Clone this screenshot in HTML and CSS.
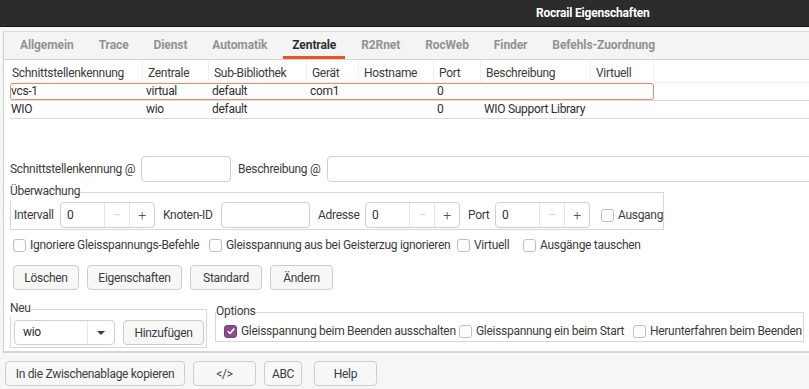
FILE: index.html
```html
<!DOCTYPE html>
<html lang="de">
<head>
    <meta charset="UTF-8">
    <title>Rocrail Eigenschaften</title>
    <link rel="stylesheet" href="styles.css">
</head>
<body>
    <div class="titlebar"><span class="title">Rocrail Eigenschaften</span></div>

    <div class="dialog">
        <div class="notebook">
            <div class="tabs">
                <span class="tab">Allgemein</span>
                <span class="tab">Trace</span>
                <span class="tab">Dienst</span>
                <span class="tab">Automatik</span>
                <span class="tab active">Zentrale</span>
                <span class="tab">R2Rnet</span>
                <span class="tab">RocWeb</span>
                <span class="tab">Finder</span>
                <span class="tab">Befehls-Zuordnung</span>
            </div>

            <div class="page">
                <div class="list">
                    <div class="list-head">
                        <span>Schnittstellenkennung</span>
                        <span>Zentrale</span>
                        <span>Sub-Bibliothek</span>
                        <span>Gerät</span>
                        <span>Hostname</span>
                        <span>Port</span>
                        <span>Beschreibung</span>
                        <span>Virtuell</span>
                    </div>
                    <div class="list-row">
                        <div class="cells selected">
                            <span>vcs-1</span>
                            <span>virtual</span>
                            <span>default</span>
                            <span>com1</span>
                            <span></span>
                            <span>0</span>
                            <span></span>
                            <span></span>
                        </div>
                    </div>
                    <div class="list-row">
                        <div class="cells">
                            <span>WIO</span>
                            <span>wio</span>
                            <span>default</span>
                            <span></span>
                            <span></span>
                            <span>0</span>
                            <span>WIO Support Library</span>
                            <span></span>
                        </div>
                    </div>
                </div>

                <div class="ident-row">
                    <label class="lbl lbl-ident">Schnittstellenkennung @</label>
                    <input class="entry entry-ident" type="text">
                    <label class="lbl lbl-desc">Beschreibung @</label>
                    <input class="entry entry-desc" type="text">
                </div>

                <fieldset class="group watch">
                    <legend>Überwachung</legend>
                    <div class="watch-row">
                        <span class="lbl lbl-interval">Intervall</span>
                        <div class="spin">
                            <span class="spin-value">0</span>
                            <span class="spin-btn dim">−</span>
                            <span class="spin-btn">+</span>
                        </div>
                        <span class="lbl lbl-node">Knoten-ID</span>
                        <input class="entry entry-node" type="text">
                        <span class="lbl lbl-addr">Adresse</span>
                        <div class="spin">
                            <span class="spin-value">0</span>
                            <span class="spin-btn dim">−</span>
                            <span class="spin-btn">+</span>
                        </div>
                        <span class="lbl lbl-port">Port</span>
                        <div class="spin">
                            <span class="spin-value">0</span>
                            <span class="spin-btn dim">−</span>
                            <span class="spin-btn">+</span>
                        </div>
                        <label class="check check-out"><span class="box"></span>Ausgang</label>
                    </div>
                </fieldset>

                <div class="check-row">
                    <label class="check c-ignore"><span class="box"></span>Ignoriere Gleisspannungs-Befehle</label>
                    <label class="check c-ghost"><span class="box"></span>Gleisspannung aus bei Geisterzug ignorieren</label>
                    <label class="check c-virtual"><span class="box"></span>Virtuell</label>
                    <label class="check"><span class="box"></span>Ausgänge tauschen</label>
                </div>

                <div class="button-row">
                    <button class="btn b-delete">Löschen</button>
                    <button class="btn b-props">Eigenschaften</button>
                    <button class="btn b-default">Standard</button>
                    <button class="btn b-change">Ändern</button>
                </div>

                <div class="bottom-groups">
                    <fieldset class="group neu">
                        <legend>Neu</legend>
                        <div class="neu-row">
                            <div class="combo">
                                <span class="combo-value">wio</span>
                                <span class="combo-arrow"></span>
                            </div>
                            <button class="btn b-add">Hinzufügen</button>
                        </div>
                    </fieldset>

                    <fieldset class="group options">
                        <legend>Options</legend>
                        <div class="options-row">
                            <label class="check o-off"><span class="box checked">
                                <svg width="10" height="10" viewBox="0 0 10 10"><path d="M1.8 5.2 L4 7.4 L8.3 2.6" fill="none" stroke="#fff" stroke-width="1.6"/></svg>
                            </span>Gleisspannung beim Beenden ausschalten</label>
                            <label class="check o-on"><span class="box"></span>Gleisspannung ein beim Start</label>
                            <label class="check"><span class="box"></span>Herunterfahren beim Beenden</label>
                        </div>
                    </fieldset>
                </div>
            </div>
        </div>

        <div class="actions">
            <button class="btn a-copy">In die Zwischenablage kopieren</button>
            <button class="btn a-xml">&lt;/&gt;</button>
            <button class="btn a-abc">ABC</button>
            <button class="btn a-help">Help</button>
        </div>
    </div>
</body>
</html>
```

FILE: styles.css
```css
* {
    box-sizing: border-box;
    margin: 0;
    padding: 0;
}

body {
    width: 809px;
    height: 389px;
    overflow: hidden;
    background: #f6f6f5;
    font-family: Roboto, "Liberation Sans", sans-serif;
    font-size: 12px;
    letter-spacing: -0.3px;
    color: #3c3c3c;
}

input, button {
    font: inherit;
    letter-spacing: inherit;
    color: inherit;
}

/* window title */
.titlebar {
    height: 27px;
    padding-left: 536px;
    background: #2c2c2c;
    border-bottom: 1px solid #151515;
    color: #ffffff;
    font-weight: bold;
    letter-spacing: -0.2px;
    line-height: 26px;
}

.dialog {
    padding: 4px 0 0 3px;
}

.notebook {
    border-top: 1px solid #dadada;
    border-left: 1px solid #cfcfcf;
}

/* tabs */
.tabs {
    display: flex;
    gap: 7px;
    height: 28px;
    padding-left: 7px;
    background: #f4f4f4;
    border-bottom: 1px solid #d4d4d4;
}

.tab {
    height: 27px;
    padding: 0 9px;
    line-height: 27px;
    font-weight: bold;
    letter-spacing: -0.1px;
    color: #929292;
    white-space: nowrap;
}

.tab.active {
    color: #2f2f2f;
    border-bottom: 3px solid #e95420;
    line-height: 26px;
}

.page {
    height: 293px;
    background: #ffffff;
    border-bottom: 2px solid #d6d6d6;
    overflow: hidden;
}

/* interface list */
.list {
    margin-left: 6px;
}

.list-head,
.cells {
    display: grid;
    grid-template-columns: 133px 66px 98px 52px 75px 47px 110px 63px;
}

.list-head {
    height: 23px;
    border-bottom: 1px solid #f2f2f2;
    color: #3a3a3a;
}

.list-head span {
    padding: 6px 0 0 5px;
    line-height: 15px;
    border-right: 1px solid #f0f0f0;
    white-space: nowrap;
}

.list-head span:first-child {
    padding-left: 2px;
}

.list-row {
    border-bottom: 1px solid #dcdcdc;
}

.cells {
    width: 644px;
    height: 17px;
    border: 1px solid transparent;
    border-radius: 3px;
    line-height: 15px;
    color: #2e2e2e;
}

.cells span {
    padding-left: 2px;
    white-space: nowrap;
}

.cells span:first-child {
    padding-left: 0;
}

.list-row .cells.selected {
    border-color: #eb8a6e;
}

/* labels and entries */
.lbl {
    flex: none;
    white-space: nowrap;
}

.entry {
    height: 26px;
    border: 1px solid #d3cfcb;
    border-radius: 4px;
    background: #ffffff;
    padding: 0 7px;
    outline: none;
}

.ident-row {
    display: flex;
    align-items: center;
    margin-top: 37px;
    padding-left: 6px;
    height: 26px;
}

.lbl-ident { width: 131px; }
.entry-ident { width: 90px; }
.lbl-desc { width: 89px; margin-left: 7px; }
.entry-desc { width: 520px; flex: none; }

/* framed groups */
.group {
    border: 1px solid #d8d8d8;
}

.group legend {
    padding: 0 0 2px;
    line-height: 14px;
    color: #3c3c3c;
}

.watch {
    width: 654px;
    margin: 2px 0 0 6px;
    padding: 2px 0 1px 3px;
}

.watch legend,
.neu legend {
    margin-left: -4px;
}

.watch-row {
    display: flex;
    align-items: center;
    height: 26px;
}

.lbl-interval { width: 46px; }
.lbl-node { width: 58px; margin-left: 8px; }
.entry-node { width: 89px; }
.lbl-addr { width: 47px; margin-left: 8px; }
.lbl-port { width: 27px; margin-left: 8px; }
.check-out { margin-left: 11px; }

.spin {
    display: flex;
    width: 95px;
    height: 26px;
    border: 1px solid #d3cfcb;
    border-radius: 4px;
    background: #ffffff;
    line-height: 24px;
}

.spin-value {
    width: 43px;
    padding-left: 6px;
    color: #2e2e2e;
}

.spin-btn {
    width: 25px;
    border-left: 1px solid #e8e5e2;
    text-align: center;
    font-size: 14px;
    font-weight: 300;
    color: #555555;
}

.spin-btn.dim {
    color: #c8c8c8;
}

/* check boxes */
.check {
    display: flex;
    align-items: center;
    white-space: nowrap;
}

.box {
    flex: none;
    display: flex;
    align-items: center;
    justify-content: center;
    width: 13px;
    height: 13px;
    margin-right: 4px;
    border: 1px solid #c2beba;
    border-radius: 3px;
    background: #ffffff;
}

.box.checked {
    background: #8e4a88;
    border-color: #7d3f78;
}

.check-row {
    display: flex;
    height: 14px;
    margin-top: 8px;
    padding-left: 9px;
}

.c-ignore { width: 196px; }
.c-ghost { width: 248px; }
.c-virtual { width: 66px; }

/* buttons */
.btn {
    height: 25px;
    border: 1px solid #d0ccc8;
    border-radius: 4px;
    background: #f7f7f7;
    text-align: center;
    white-space: nowrap;
}

.button-row {
    display: flex;
    gap: 8px;
    margin-top: 13px;
    padding-left: 9px;
}

.b-delete { width: 66px; }
.b-props { width: 95px; }
.b-default { width: 72px; }
.b-change { width: 63px; }

/* lower groups */
.bottom-groups {
    display: flex;
    align-items: flex-start;
    margin-top: 11px;
    padding-left: 6px;
}

.neu {
    width: 197px;
    padding: 3px 2px 2px 3px;
}

.neu-row {
    display: flex;
    gap: 8px;
}

.combo {
    display: flex;
    width: 101px;
    height: 25px;
    border: 1px solid #d3cfcb;
    border-radius: 4px;
    background: #ffffff;
    line-height: 23px;
}

.combo-value {
    flex: 1;
    padding-left: 8px;
    color: #2e2e2e;
}

.combo-arrow {
    width: 27px;
    border-left: 1px solid #e8e5e2;
    display: flex;
    align-items: center;
    justify-content: center;
}

.combo-arrow::after {
    content: "";
    border-left: 4px solid transparent;
    border-right: 4px solid transparent;
    border-top: 4px solid #3c3c3c;
}

.b-add { width: 81px; }

.options {
    width: 589px;
    margin: 3px 0 0 8px;
    padding: 4px 0 3px 8px;
}

.options legend {
    margin-left: -8px;
}

.options-row {
    display: flex;
    height: 14px;
}

.o-off { width: 235px; }
.o-on { width: 174px; }

/* dialog buttons */
.actions {
    display: flex;
    padding: 8px 0 0 2px;
}

.a-copy { width: 180px; }
.a-xml { width: 63px; margin-left: 8px; }
.a-abc { width: 38px; margin-left: 8px; }
.a-help { width: 63px; margin-left: 12px; }
```
